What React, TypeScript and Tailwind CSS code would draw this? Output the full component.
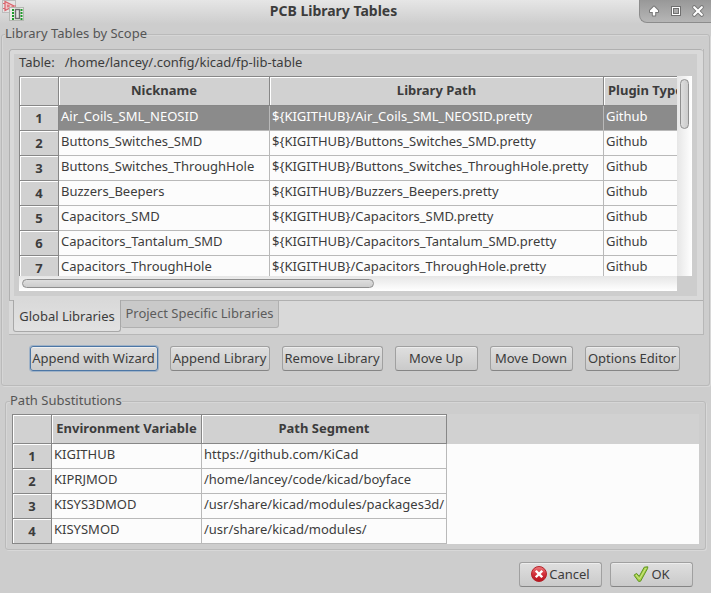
import { useState } from 'react';
import type { ReactNode } from 'react';

const libraries = [
  'Air_Coils_SML_NEOSID',
  'Buttons_Switches_SMD',
  'Buttons_Switches_ThroughHole',
  'Buzzers_Beepers',
  'Capacitors_SMD',
  'Capacitors_Tantalum_SMD',
  'Capacitors_ThroughHole',
];

const substitutions = [
  ['KIGITHUB', 'https://github.com/KiCad'],
  ['KIPRJMOD', '/home/lancey/code/kicad/boyface'],
  ['KISYS3DMOD', '/usr/share/kicad/modules/packages3d/'],
  ['KISYSMOD', '/usr/share/kicad/modules/'],
];

const edge = 'border-[#878787] shadow-[inset_1px_1px_0_#ffffff]';
const headCell = `h-[30px] border-y border-r bg-[#d1d1d1] pb-0.5 font-bold ${edge}`;
const rowHead = `h-[25px] border-x border-b bg-[#d1d1d1] p-0 text-center font-bold ${edge}`;
const cell = 'h-[25px] border-r border-b border-[#b9b9b9] p-0 pb-1 pl-0.5';
const group =
  'min-w-0 rounded-[3px] border border-[#bababa] shadow-[1px_1px_0_#d8d8d8,inset_1px_1px_0_#d6d6d6]';

function AppIcon() {
  return (
    <svg width="24" height="22" viewBox="0 0 24 22" aria-hidden="true">
      <rect x="2.5" y="0.5" width="13" height="12" fill="#e6e4e4" stroke="#bdbdbd" />
      <path d="M5 1.5v9l9-4.5zM3 3.5h2M3 8.5h2M14 6h2" fill="#f1c9cb" stroke="#d9636b" strokeWidth="1.2" />
      <path d="M7 6h3M8 4.5v3" stroke="#d9636b" fill="none" />
      <rect x="9.5" y="7.5" width="14" height="13" fill="#e9ece7" stroke="#b4b7b2" />
      <path d="M13 9v11M21.5 9v11" stroke="#1f9a2b" strokeWidth="2" strokeDasharray="2 1" fill="none" />
      <rect x="15.5" y="9.5" width="4" height="9" fill="#e4e4e4" stroke="#6c6c6c" strokeWidth="1.4" />
    </svg>
  );
}

function WindowControls() {
  return (
    <div className="flex h-[23px] w-[72px] items-center justify-between rounded-bl-lg border-b border-l border-[#8c8c8c] bg-gradient-to-b from-[#989898] to-[#b6b6b6] pr-[5px] pl-1.5">
      <button type="button" aria-label="Shade" className="h-4 w-4">
        <svg width="16" height="16" viewBox="0 0 16 16">
          <path
            d="M8 3.5 12 7.5V9H9.2V12.5H6.8V9H4V7.5Z"
            fill="#fff"
            stroke="#777"
            strokeWidth="2"
            strokeLinejoin="round"
            paintOrder="stroke"
          />
        </svg>
      </button>
      <button type="button" aria-label="Maximize" className="h-4 w-4">
        <svg width="16" height="16" viewBox="0 0 16 16">
          <rect x="3" y="3" width="10" height="10" fill="#707070" />
          <rect x="4" y="4" width="8" height="8" fill="#fff" />
          <rect x="5" y="5" width="6" height="6" fill="#707070" />
          <rect x="6" y="6" width="4" height="4" fill="#aaa" />
        </svg>
      </button>
      <button type="button" aria-label="Close" className="h-4 w-4">
        <svg width="16" height="16" viewBox="0 0 16 16">
          <path d="m4.2 4.2 7.6 7.6m0-7.6-7.6 7.6" stroke="#777" strokeWidth="4" strokeLinecap="round" />
          <path d="m4.2 4.2 7.6 7.6m0-7.6-7.6 7.6" stroke="#fff" strokeWidth="2.2" strokeLinecap="round" />
        </svg>
      </button>
    </div>
  );
}

function CancelIcon() {
  return (
    <svg width="16" height="16" viewBox="0 0 16 16" aria-hidden="true">
      <defs>
        <linearGradient id="cancel" x1="0" y1="0" x2="0" y2="1">
          <stop offset="0" stopColor="#ef7d80" />
          <stop offset="0.5" stopColor="#d3303a" />
          <stop offset="1" stopColor="#b5121c" />
        </linearGradient>
      </defs>
      <circle cx="8" cy="8" r="7.5" fill="url(#cancel)" stroke="#b3242b" />
      <path d="m5.6 5.6 4.8 4.8m0-4.8-4.8 4.8" stroke="#fff" strokeWidth="2.4" strokeLinecap="square" />
    </svg>
  );
}

function OkIcon() {
  return (
    <svg width="16" height="16" viewBox="0 0 16 16" aria-hidden="true">
      <path
        d="M1 9.2 3.6 7.4 6.2 10.4 11.2 1.2 14.8.8 14.6 2.4 7.6 15.2 5.6 15.4Z"
        fill="#a9d04a"
        stroke="#5d9420"
        strokeLinejoin="round"
      />
      <path d="m3 9 3.4 4L13 2" fill="none" stroke="#cbe684" />
    </svg>
  );
}

function PushButton({ width, focused = false, children }: { width: string; focused?: boolean; children: ReactNode }) {
  const frame = focused
    ? 'border-[#4c76a5] shadow-[inset_0_1px_0_#f0f0f0,0_0_0_1px_#9fb2c7]'
    : 'border-[#a0a0a0] border-b-[#858585] shadow-[inset_0_1px_0_#ededed]';
  return (
    <button
      type="button"
      className={`flex h-[25px] items-center justify-center gap-0.5 rounded-[3px] border bg-gradient-to-b from-[#dfdfdf] to-[#cacaca] pb-px whitespace-nowrap ${width} ${frame}`}
    >
      {children}
    </button>
  );
}

export default function App() {
  const [selected, setSelected] = useState(0);
  return (
    <main className="w-full bg-[#cdcdcd] pb-1.5 font-['Noto_Sans',sans-serif] text-[13px] leading-[18px] text-[#3c3c3c]">
      <header className="flex h-6 items-start bg-gradient-to-b from-[#e6e6e6] to-[#cdcdcd]">
        <div className="w-7">
          <AppIcon />
        </div>
        <h1 className="flex-1 pt-0.5 text-center text-[14px] font-bold">PCB Library Tables</h1>
        <WindowControls />
      </header>

      <fieldset className={`mx-px px-[7px] pb-3.5 ${group}`}>
        <legend className="-ml-1 bg-[#cdcdcd] pb-0.5 text-[#555555]">Library Tables by Scope</legend>

        <section className="mt-[5px] mr-[-2px] border-r border-b border-[#b7b7b7] bg-[#d9d9d9]">
          <div className="rounded-t-[3px] border border-r-0 border-[#b0b0b0] py-1 pr-1.5 pl-1">
            <div className="bg-[#cdcdcd] px-[5px] pb-[5px]">
              <p className="flex gap-2.5 pb-1.5 leading-4 whitespace-nowrap">
                <span>Table:</span>
                <span>/home/lancey/.config/kicad/fp-lib-table</span>
              </p>
              <div className="grid grid-cols-[1fr_15px]">
                <div className="h-[200px] overflow-hidden bg-[#fcfcfc]">
                  <table className="w-[714px] table-fixed border-separate border-spacing-0">
                    <colgroup>
                      <col className="w-10" />
                      <col className="w-[211px]" />
                      <col className="w-[334px]" />
                      <col />
                    </colgroup>
                    <thead>
                      <tr>
                        <th className={`border-l ${headCell}`} />
                        <th className={headCell}>Nickname</th>
                        <th className={headCell}>Library Path</th>
                        <th className={`pl-1 text-left ${headCell}`}>Plugin Type</th>
                      </tr>
                    </thead>
                    <tbody>
                      {libraries.map((name, i) => (
                        <tr
                          key={name}
                          onClick={() => setSelected(i)}
                          className={i === selected ? 'bg-[#8b8b8b] text-white' : 'bg-[#fcfcfc]'}
                        >
                          <th className={`text-[#3c3c3c] ${rowHead}`}>{i + 1}</th>
                          <td className={cell}>{name}</td>
                          <td className={cell}>{'${KIGITHUB}/' + name + '.pretty'}</td>
                          <td className={cell}>Github</td>
                        </tr>
                      ))}
                    </tbody>
                  </table>
                </div>
                <div className="bg-gradient-to-r from-[#e6e6e6] to-white px-[3px] pt-[3px]">
                  <div className="h-[50px] rounded-full border border-[#8f8f8f] bg-gradient-to-r from-[#dedede] to-[#cccccc]" />
                </div>
                <div className="h-[15px] bg-gradient-to-b from-[#e6e6e6] to-white px-[3px] pt-[3px]">
                  <div className="h-[9px] w-[54%] rounded-full border border-[#8f8f8f] bg-gradient-to-b from-[#dedede] to-[#cccccc]" />
                </div>
              </div>
            </div>
          </div>
          <div role="tablist" className="-mt-px flex h-[34px] items-start pl-1">
            <button
              type="button"
              role="tab"
              aria-selected="true"
              className="h-8 w-[108px] rounded-b-[3px] border border-t-0 border-[#a8a8a8] bg-gradient-to-b from-[#d9d9d9] to-[#e2e2e2] whitespace-nowrap"
            >
              Global Libraries
            </button>
            <button
              type="button"
              role="tab"
              aria-selected="false"
              className="h-7 w-[158px] rounded-b-[3px] border border-l-0 border-[#b0b0b0] bg-[#c9c9c9] pb-0.5 whitespace-nowrap text-[#5c5c5c]"
            >
              Project Specific Libraries
            </button>
          </div>
        </section>

        <div className="mt-[11px] flex justify-center gap-3 pr-0.5">
          <PushButton width="w-[128px]" focused>Append with Wizard</PushButton>
          <PushButton width="w-[100px]">Append Library</PushButton>
          <PushButton width="w-[101px]">Remove Library</PushButton>
          <PushButton width="w-[83px]">Move Up</PushButton>
          <PushButton width="w-[83px]">Move Down</PushButton>
          <PushButton width="w-[95px]">Options Editor</PushButton>
        </div>
      </fieldset>

      <fieldset className={`mx-[5px] mt-[5px] px-1.5 pb-[5px] ${group}`}>
        <legend className="-ml-0.5 bg-[#cdcdcd] pb-0.5 text-[#555555]">Path Substitutions</legend>
        <div className="mt-[3px] bg-[linear-gradient(#d1d1d1_30px,#fcfcfc_30px)]">
          <table className="w-[435px] table-fixed border-separate border-spacing-0">
            <colgroup>
              <col className="w-10" />
              <col className="w-[150px]" />
              <col />
            </colgroup>
            <thead>
              <tr>
                <th className={`border-l ${headCell}`} />
                <th className={headCell}>Environment Variable</th>
                <th className={headCell}>Path Segment</th>
              </tr>
            </thead>
            <tbody>
              {substitutions.map(([name, path], i) => (
                <tr key={name} className="bg-[#fcfcfc]">
                  <th className={rowHead}>{i + 1}</th>
                  <td className={cell}>{name}</td>
                  <td className={cell}>{path}</td>
                </tr>
              ))}
            </tbody>
          </table>
        </div>
      </fieldset>

      <footer className="mt-3 flex justify-end gap-2 pr-[18px]">
        <PushButton width="w-[83px]">
          <CancelIcon />
          Cancel
        </PushButton>
        <PushButton width="w-[83px]">
          <OkIcon />
          OK
        </PushButton>
      </footer>
    </main>
  );
}
